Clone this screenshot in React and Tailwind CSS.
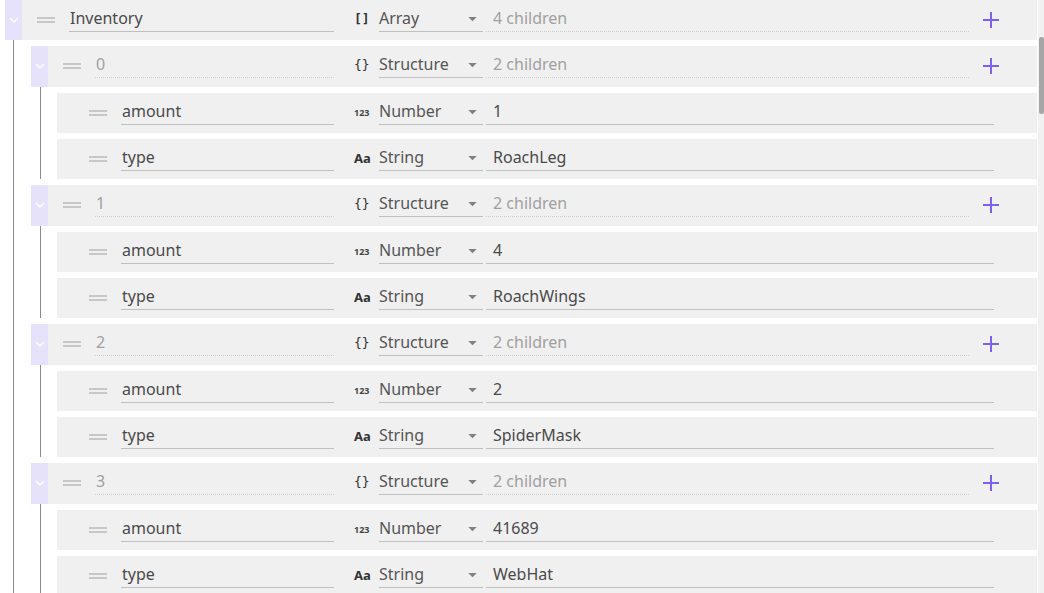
import React from 'react';

const font = { fontFamily: '"Noto Sans", "Open Sans", sans-serif' };

const items = [
  { amount: '1', type: 'RoachLeg' },
  { amount: '4', type: 'RoachWings' },
  { amount: '2', type: 'SpiderMask' },
  { amount: '41689', type: 'WebHat' },
];

function Chevron() {
  return (
    <svg width="10" height="6" viewBox="0 0 10 6" className="block">
      <polyline points="1,1 5,5 9,1" fill="none" stroke="#ffffff" strokeWidth="1.4" />
    </svg>
  );
}

function Handle() {
  return (
    <svg width="18" height="6" viewBox="0 0 18 6" className="block">
      <line x1="0" y1="1" x2="18" y2="1" stroke="#c2c2c2" strokeWidth="1.8" />
      <line x1="0" y1="5" x2="18" y2="5" stroke="#c2c2c2" strokeWidth="1.8" />
    </svg>
  );
}

function Plus() {
  return (
    <svg width="16" height="16" viewBox="0 0 16 16" className="block">
      <line x1="8" y1="0" x2="8" y2="16" stroke="#7d60f0" strokeWidth="2" />
      <line x1="0" y1="8" x2="16" y2="8" stroke="#7d60f0" strokeWidth="2" />
    </svg>
  );
}

function TypeIcon({ kind }) {
  if (kind === 'Array')
    return <span className="font-['DejaVu_Sans_Mono',monospace] text-[13px] leading-none font-bold text-[#333]">[]</span>;
  if (kind === 'Structure')
    return <span className="font-['DejaVu_Sans_Mono',monospace] text-[13px] leading-none text-[#333]">{'{}'}</span>;
  if (kind === 'Number') return <span className="text-[9px] leading-none font-bold text-[#444] mt-[2px]">123</span>;
  return <span className="text-[13px] leading-none font-bold text-[#333] mt-[2px]">Aa</span>;
}

function Row({ parent, name, indexName, kind, value }) {
  return (
    <div className="flex h-[40.33px] bg-[#f0f0f0]">
      <div className={`w-[17px] shrink-0 flex items-center justify-center ${parent ? 'bg-[#e7e2fc]' : ''}`}>
        {parent && <Chevron />}
      </div>
      <div className="ml-[15px] w-[18px] shrink-0 flex items-center">
        <Handle />
      </div>
      <div
        className={`ml-[14px] flex-1 mt-[5px] h-[27px] flex items-center border-b ${
          indexName ? 'border-dotted border-[#d0d0d0] text-[#a0a0a0]' : 'border-solid border-[#c0c0c0] text-[#4a4a4a]'
        } text-[16px] leading-[22px] pl-[1px]`}
      >
        {name}
      </div>
      <div className="w-[703px] shrink-0 flex">
        <div className="w-[45px] pl-[20px] mt-[5px] h-[27px] flex items-center">
          <TypeIcon kind={kind} />
        </div>
        <div className="w-[104px] mt-[5px] h-[27px] flex items-center justify-between border-b border-[#c0c0c0] text-[16px] text-[#555] leading-[22px]">
          <span>{kind}</span>
          <svg width="9" height="5" viewBox="0 0 10 6" className="mr-[6px] mt-[3px]">
            <polygon points="0,0 10,0 5,5" fill="#808080" />
          </svg>
        </div>
        <div
          className={`ml-[3px] ${parent ? 'w-[483px] border-dotted border-[#d0d0d0] text-[#a0a0a0]' : 'w-[508px] border-solid border-[#c0c0c0] text-[#4a4a4a]'} mt-[5px] h-[27px] pl-[7px] flex items-center border-b text-[16px] leading-[22px]`}
        >
          {value}
        </div>
        {parent && (
          <div className="ml-[14px] w-[16px] flex items-center">
            <Plus />
          </div>
        )}
      </div>
    </div>
  );
}

export default function App() {
  return (
    <div className="flex h-[593px] overflow-hidden bg-white" style={font}>
      <div className="w-[1037px] shrink-0 pl-[5px]">
        <Row parent name="Inventory" kind="Array" value="4 children" />
        <div className="ml-[8px] border-l border-[#8c8c8c] pl-[17px]">
          {items.map((it, i) => (
            <div key={i} className="pt-[6px]">
              <Row parent indexName name={String(i)} kind="Structure" value="2 children" />
              <div className="ml-[9px] border-l border-[#8c8c8c] pl-[16px]">
                <div className="pt-[6px]">
                  <Row name="amount" kind="Number" value={it.amount} />
                </div>
                <div className="pt-[6px]">
                  <Row name="type" kind="String" value={it.type} />
                </div>
              </div>
            </div>
          ))}
        </div>
      </div>
      <div className="w-[7px] shrink-0 flex flex-col pl-[1px] bg-white">
        <div className="flex-1 bg-[#f1f1f1] pt-[37px] pl-[1px]">
          <div className="h-[77px] w-[5px] rounded-[2px] bg-[#a6a6a6]"></div>
        </div>
      </div>
    </div>
  );
}
